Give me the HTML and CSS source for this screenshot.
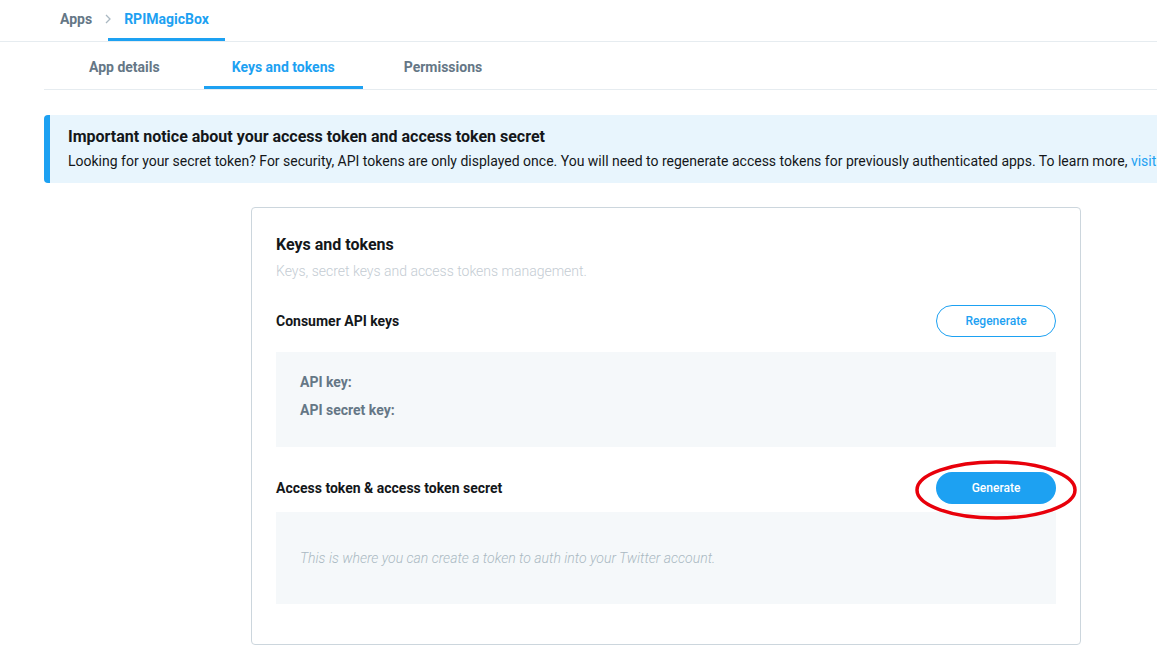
FILE: index.html
```html
<!DOCTYPE html>
<html lang="en">
<head>
  <meta charset="UTF-8" />
  <title>RPIMagicBox - Keys and tokens</title>
  <link rel="stylesheet" href="styles.css">
</head>
<body>
  <!-- Breadcrumb -->
  <div class="breadcrumb">
    <a class="crumb" href="#">Apps</a>
    <span class="crumb-sep">
      <svg width="8" height="12" viewBox="0 0 8 12"><path d="M2 2l4 4-4 4" fill="none" stroke="#aab8c2" stroke-width="1.3"/></svg>
    </span>
    <a class="crumb crumb-active" href="#">RPIMagicBox</a>
  </div>

  <!-- Tabs -->
  <div class="tabs">
    <a class="tab" href="#">App details</a>
    <a class="tab tab-active" href="#">Keys and tokens</a>
    <a class="tab" href="#">Permissions</a>
  </div>

  <!-- Aviso -->
  <div class="notice">
    <div class="notice-title">Important notice about your access token and access token secret</div>
    <div class="notice-text">Looking for your secret token? For security, API tokens are only displayed once. You will need to regenerate access tokens for previously authenticated apps. To learn more, <a href="#">visit</a></div>
  </div>

  <!-- Tarjeta -->
  <div class="card">
    <h2 class="card-title">Keys and tokens</h2>
    <p class="card-sub">Keys, secret keys and access tokens management.</p>

    <div class="row">
      <h3 class="row-title">Consumer API keys</h3>
      <button class="btn btn-outline">Regenerate</button>
    </div>
    <div class="keys-box">
      <div class="key-line">API key:</div>
      <div class="key-line">API secret key:</div>
    </div>

    <div class="row row-access">
      <h3 class="row-title">Access token &amp; access token secret</h3>
      <div class="btn-wrap">
        <button class="btn btn-primary">Generate</button>
        <svg class="circle-mark" width="168" height="64" viewBox="0 0 168 64">
          <ellipse cx="82" cy="31" rx="79" ry="28" fill="none" stroke="#e8000b" stroke-width="3.5"/>
        </svg>
      </div>
    </div>
    <div class="empty-box">
      <span>This is where you can create a token to auth into your Twitter account.</span>
    </div>
  </div>
</body>
</html>
```

FILE: styles.css
```css
body {
  margin: 0;
  font-family: Roboto, "Helvetica Neue", Arial, sans-serif;
  color: #14171a;
  background: #fff;
  overflow: hidden;
}

a {
  text-decoration: none;
}

.breadcrumb {
  display: flex;
  align-items: stretch;
  height: 42px;
  padding-left: 60px;
  border-bottom: 1px solid #e6ecf0;
  box-sizing: border-box;
}

.crumb {
  display: flex;
  align-items: center;
  font-size: 14px;
  font-weight: 700;
  color: #657786;
  padding-bottom: 4px;
}

.crumb-sep {
  display: flex;
  align-items: center;
  padding: 0 0 4px 12px;
}

.crumb-active {
  color: #1da1f2;
  margin-left: -4px;
  padding: 0 16px 1px;
  border-bottom: 3px solid #1da1f2;
}

.tabs {
  display: flex;
  gap: 16px;
  margin-left: 44px;
  padding-left: 16px;
  height: 48px;
  border-bottom: 1px solid #e6ecf0;
  box-sizing: border-box;
}

.tab {
  display: flex;
  align-items: center;
  padding: 5px 29px 0;
  font-size: 14px;
  font-weight: 700;
  color: #657786;
  border-bottom: 3px solid transparent;
}

.tab-active {
  margin-left: -1px;
  padding: 5px 28px 0;
  color: #1da1f2;
  border-bottom-color: #1da1f2;
}

.tab:last-child {
  margin-left: -4px;
}

.notice {
  margin: 25px 0 0 44px;
  height: 68px;
  box-sizing: border-box;
  background: #e8f5fd;
  border-left: 6px solid #1da1f2;
  border-radius: 4px 0 0 4px;
  padding: 12px 0 0 18px;
  white-space: nowrap;
}

.notice-title {
  font-size: 16px;
  font-weight: 700;
  line-height: 20px;
}

.notice-text {
  font-size: 14px;
  line-height: 20px;
  margin-top: 4px;
}

.notice-text a {
  color: #1da1f2;
}

.card {
  margin: 24px 0 0 251px;
  width: 830px;
  box-sizing: border-box;
  border: 1px solid #ccd6dd;
  border-radius: 4px;
  padding: 27px 24px 40px;
}

.card-title {
  margin: 0;
  font-size: 16px;
  line-height: 20px;
  font-weight: 700;
}

.card-sub {
  margin: 6px 0 0;
  font-size: 14px;
  line-height: 20px;
  font-weight: 300;
  color: #c4ccd3;
}

.row {
  display: flex;
  align-items: center;
  justify-content: space-between;
  margin-top: 24px;
  height: 32px;
}

.row-access {
  margin-top: 25px;
}

.row-title {
  margin: 0;
  font-size: 14px;
  font-weight: 700;
}

.btn {
  width: 120px;
  height: 32px;
  border-radius: 16px;
  font-family: inherit;
  font-size: 12px;
  font-weight: 500;
  cursor: pointer;
  box-sizing: border-box;
}

.btn-outline {
  background: #fff;
  color: #1da1f2;
  border: 1px solid #1da1f2;
}

.btn-primary {
  background: #1da1f2;
  color: #fff;
  border: none;
}

.btn-wrap {
  position: relative;
  display: flex;
}

.circle-mark {
  position: absolute;
  left: -22px;
  top: -13px;
  pointer-events: none;
}

.keys-box {
  margin-top: 15px;
  height: 95px;
  box-sizing: border-box;
  background: #f5f8fa;
  padding: 20px 24px 0;
}

.key-line {
  font-size: 14px;
  line-height: 20px;
  font-weight: 700;
  color: #657786;
  margin-bottom: 8px;
}

.empty-box {
  margin-top: 8px;
  height: 92px;
  background: #f5f8fa;
  display: flex;
  align-items: center;
  padding: 0 24px;
  box-sizing: border-box;
  font-size: 14px;
  font-weight: 300;
  font-style: italic;
  color: #aab8c2;
}
```
